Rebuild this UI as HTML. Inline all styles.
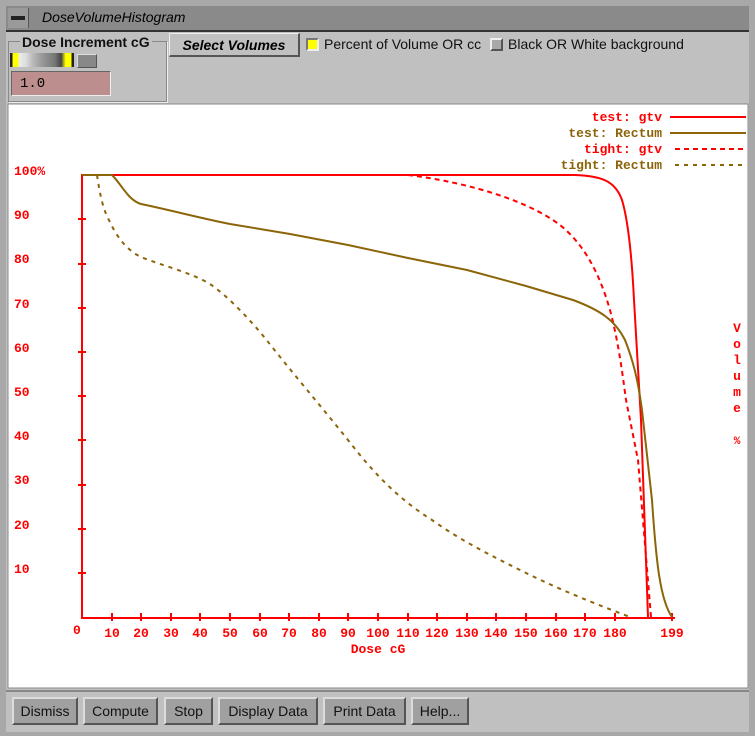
<!DOCTYPE html>
<html><head><meta charset="utf-8"><style>
body{margin:0;width:755px;height:736px;background:#a8a8a8;overflow:hidden;font-family:"Liberation Sans",sans-serif;position:relative}
.abs{position:absolute}
.btn{position:absolute;top:697px;height:28px;background:#a0a0a0;border-top:2px solid #dcdcdc;border-left:2px solid #dcdcdc;border-right:2px solid #555;border-bottom:2px solid #555;box-sizing:border-box;font-size:14px;line-height:24px;text-align:center;color:#111}
</style></head><body>
<div class="abs" style="left:6px;top:6px;width:743px;height:724px;background:#c0c0c0"></div>
<div class="abs" style="left:6px;top:6px;width:743px;height:24px;background:#8a8a8a;border-bottom:2px solid #333"></div>
<div class="abs" style="left:8px;top:8px;width:20px;height:20px;background:#9a9a9a;border-right:1px solid #555"></div>
<div class="abs" style="left:11px;top:16px;width:14px;height:4px;background:#222"></div>
<div class="abs" style="left:42px;top:9px;font-size:14px;font-style:italic;color:#000">DoseVolumeHistogram</div>
<div class="abs" style="left:8px;top:41px;width:157px;height:59px;border:1px solid #888;box-shadow:1px 1px 0 #eee"></div>
<div class="abs" style="left:20px;top:34px;background:#c0c0c0;padding:0 2px;font-size:14px;font-weight:bold;color:#111">Dose Increment cG</div>
<div class="abs" style="left:10px;top:53px;width:64px;height:14px;background:linear-gradient(90deg,#222 0,#222 4%,#ffff00 4%,#ffff00 13%,#eee 13%,#ddd 25%,#bbb 35%,#999 50%,#777 70%,#444 80%,#ffff00 87%,#ffff00 96%,#222 96%)"></div>
<div class="abs" style="left:77px;top:54px;width:18px;height:12px;background:#888;border:1px solid #555;border-top-color:#ddd;border-left-color:#ddd"></div>
<div class="abs" style="left:11px;top:71px;width:100px;height:25px;background:#bc8e8e;border:1px solid #666;border-right-color:#eee;border-bottom-color:#eee;font-family:'Liberation Mono',monospace;font-size:14px;line-height:25px;padding-left:8px;box-sizing:border-box">1.0</div>
<div class="abs" style="left:169px;top:33px;width:131px;height:24px;background:#c0c0c0;border:1px solid #eee;border-right:2px solid #555;border-bottom:2px solid #555;box-sizing:border-box;font-size:14px;font-weight:bold;font-style:italic;text-align:center;line-height:22px">Select Volumes</div>
<div class="abs" style="left:306px;top:38px;width:9px;height:9px;background:#ffff00;border:2px solid #777;border-right-color:#eee;border-bottom-color:#eee"></div>
<div class="abs" style="left:324px;top:36px;font-size:14px;color:#111">Percent of Volume OR cc</div>
<div class="abs" style="left:490px;top:38px;width:9px;height:9px;background:#a8a8a8;border:2px solid #eee;border-right-color:#555;border-bottom-color:#555"></div>
<div class="abs" style="left:508px;top:36px;font-size:14px;color:#111">Black OR White background</div>
<svg class="abs" style="left:0;top:0" width="755" height="736">
<rect x="8" y="104" width="740" height="584" fill="#fff" stroke="#888"/>
<g font-family="Liberation Mono,monospace" font-weight="bold" font-size="13">
<g fill="#ff0000" text-anchor="end">
<text x="662" y="121">test: gtv</text><text x="662" y="153">tight: gtv</text></g>
<g fill="#8b6508" text-anchor="end">
<text x="662" y="137">test: Rectum</text><text x="662" y="169">tight: Rectum</text></g>
<line x1="670" y1="117" x2="746" y2="117" stroke="#f00" stroke-width="2"/>
<line x1="670" y1="133" x2="746" y2="133" stroke="#8b6508" stroke-width="2"/>
<line x1="675" y1="149" x2="746" y2="149" stroke="#f00" stroke-width="2" stroke-dasharray="5,4"/>
<line x1="675" y1="165" x2="746" y2="165" stroke="#8b6508" stroke-width="2" stroke-dasharray="4,5"/>
<g fill="#f00">
<text x="14" y="175">100%</text>
<text x="14" y="219">90</text><text x="14" y="263">80</text><text x="14" y="308">70</text><text x="14" y="352">60</text><text x="14" y="396">50</text><text x="14" y="440">40</text><text x="14" y="484">30</text><text x="14" y="529">20</text><text x="14" y="573">10</text>
<text x="73" y="634">0</text>
<g text-anchor="middle">
<text x="112" y="637">10</text><text x="141" y="637">20</text><text x="171" y="637">30</text><text x="200" y="637">40</text><text x="230" y="637">50</text><text x="260" y="637">60</text><text x="289" y="637">70</text><text x="319" y="637">80</text><text x="348" y="637">90</text><text x="378" y="637">100</text><text x="408" y="637">110</text><text x="437" y="637">120</text><text x="467" y="637">130</text><text x="496" y="637">140</text><text x="526" y="637">150</text><text x="556" y="637">160</text><text x="585" y="637">170</text><text x="615" y="637">180</text><text x="672" y="637">199</text>
<text x="378" y="653">Dose cG</text>
<text x="737" y="332">V</text><text x="737" y="348">o</text><text x="737" y="364">l</text><text x="737" y="380">u</text><text x="737" y="396">m</text><text x="737" y="412">e</text><text x="737" y="444" font-size="11">%</text>
</g></g></g>
<g stroke="#f00" stroke-width="2" fill="none">
<path d="M82 174V618H675M78 219h8M78 264h8M78 308h8M78 352h8M78 396h8M78 440h8M78 485h8M78 529h8M78 573h8M112 613v8M141 613v8M171 613v8M200 613v8M230 613v8M260 613v8M289 613v8M319 613v8M348 613v8M378 613v8M408 613v8M437 613v8M467 613v8M496 613v8M526 613v8M556 613v8M585 613v8M615 613v8M672 613v8"/>
</g>
<g fill="none" stroke-width="2">
<path d="M82 175H575C600 176 615 180 622 200C628 220 632 260 634 300L641 420L648 617" stroke="#f00"/>
<path d="M408 175C450 180 520 195 560 225C585 245 600 275 610 310C618 340 622 370 626 400L638 460L651 617" stroke="#f00" stroke-dasharray="5,4"/>
<path d="M82 175H112C122 185 128 200 141 204C170 210 200 218 230 224L290 234L348 245L408 258L467 270L526 286L573 300C600 310 615 320 625 340C633 360 638 380 642 410L652 500C656 560 660 600 672 617" stroke="#8b6508"/>
<path d="M97 175C100 195 103 210 110 222C118 240 130 252 141 257C160 265 190 272 210 284C230 298 250 320 265 338C290 370 320 405 348 440C375 475 400 500 432 520C460 540 490 555 520 570C550 585 580 598 630 617" stroke="#8b6508" stroke-dasharray="4,5"/>
</g>
</svg>
<div class="abs" style="left:6px;top:690px;width:743px;height:40px;background:#c0c0c0;border-top:2px solid #888"></div>
<div class="btn" style="left:12px;width:66px">Dismiss</div>
<div class="btn" style="left:83px;width:75px">Compute</div>
<div class="btn" style="left:164px;width:49px">Stop</div>
<div class="btn" style="left:218px;width:100px">Display Data</div>
<div class="btn" style="left:323px;width:83px">Print Data</div>
<div class="btn" style="left:411px;width:58px">Help...</div>
</body></html>
